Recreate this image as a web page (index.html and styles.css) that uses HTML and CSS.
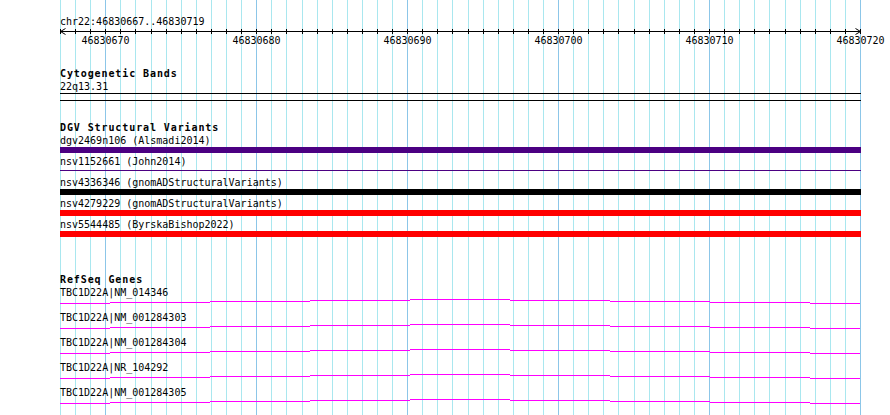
FILE: index.html
```html
<!DOCTYPE html>
<html>
  <head>
    <meta charset="utf-8">
    <title>chr22:46830667..46830719</title>
    <link rel="stylesheet" href="styles.css">
  </head>
  <body>
    <div class="browser">
      <svg class="grid" id="grid" width="890" height="415"></svg>

      <div class="tracks">
        <div class="ruler">
          <div class="locus">chr22:46830667..46830719</div>
          <svg class="scale" id="scale" width="801" height="8">
            <path class="arrow" d="M5.5 1.5L0.5 4.5L5.5 7.5"/>
            <path class="arrow" d="M795.5 1.5L800.5 4.5L795.5 7.5"/>
          </svg>
          <div class="scale-labels">
            <span style="left:45.5px">46830670</span>
            <span style="left:196.5px">46830680</span>
            <span style="left:347.5px">46830690</span>
            <span style="left:498.5px">46830700</span>
            <span style="left:649.5px">46830710</span>
            <span style="left:800.5px">46830720</span>
          </div>
        </div>

        <div class="track track-cyto">
          <div class="track-title">Cytogenetic Bands</div>
          <div class="feature">
            <div class="feature-label">22q13.31</div>
            <div class="band"></div>
          </div>
        </div>

        <div class="track track-dgv">
          <div class="track-title">DGV Structural Variants</div>
          <div class="feature">
            <div class="feature-label">dgv2469n106 (Alsmadi2014)</div>
            <div class="bar bar-indigo"></div>
          </div>
          <div class="feature">
            <div class="feature-label">nsv1152661 (John2014)</div>
            <div class="bar bar-thin"></div>
          </div>
          <div class="feature">
            <div class="feature-label">nsv4336346 (gnomADStructuralVariants)</div>
            <div class="bar bar-black"></div>
          </div>
          <div class="feature">
            <div class="feature-label">nsv4279229 (gnomADStructuralVariants)</div>
            <div class="bar bar-red"></div>
          </div>
          <div class="feature">
            <div class="feature-label">nsv5544485 (ByrskaBishop2022)</div>
            <div class="bar bar-red"></div>
          </div>
        </div>

        <div class="track track-genes">
          <div class="track-title">RefSeq Genes</div>
          <div class="feature feature-gene">
            <div class="feature-label">TBC1D22A|NM_014346</div>
            <svg class="intron" width="800" height="8"><path d="M0 5.5H50M50 4.5H150M150 3.5H250M250 2.5H350M350 1.5H450M450 2.5H550M550 3.5H650M650 4.5H750M750 5.5H800"/></svg>
          </div>
          <div class="feature feature-gene">
            <div class="feature-label">TBC1D22A|NM_001284303</div>
            <svg class="intron" width="800" height="8"><path d="M0 5.5H50M50 4.5H150M150 3.5H250M250 2.5H350M350 1.5H450M450 2.5H550M550 3.5H650M650 4.5H750M750 5.5H800"/></svg>
          </div>
          <div class="feature feature-gene">
            <div class="feature-label">TBC1D22A|NM_001284304</div>
            <svg class="intron" width="800" height="8"><path d="M0 5.5H50M50 4.5H150M150 3.5H250M250 2.5H350M350 1.5H450M450 2.5H550M550 3.5H650M650 4.5H750M750 5.5H800"/></svg>
          </div>
          <div class="feature feature-gene">
            <div class="feature-label">TBC1D22A|NR_104292</div>
            <svg class="intron" width="800" height="8"><path d="M0 5.5H50M50 4.5H150M150 3.5H250M250 2.5H350M350 1.5H450M450 2.5H550M550 3.5H650M650 4.5H750M750 5.5H800"/></svg>
          </div>
          <div class="feature feature-gene">
            <div class="feature-label">TBC1D22A|NM_001284305</div>
            <svg class="intron" width="800" height="8"><path d="M0 5.5H50M50 4.5H150M150 3.5H250M250 2.5H350M350 1.5H450M450 2.5H550M550 3.5H650M650 4.5H750M750 5.5H800"/></svg>
          </div>
        </div>
      </div>
    </div>

    <script>
      var NS = 'http://www.w3.org/2000/svg';
      var grid = document.getElementById('grid');
      var scale = document.getElementById('scale');

      // 53 bases over 800px, from 46830667 on the left
      var BASES = 53;
      var WIDTH = 800;

      function rect(svg, x, y, w, h, cls){
        var r = document.createElementNS(NS, 'rect');
        r.setAttribute('x', x);
        r.setAttribute('y', y);
        r.setAttribute('width', w);
        r.setAttribute('height', h);
        r.setAttribute('class', cls);
        svg.appendChild(r);
      }

      rect(scale, 0, 4, WIDTH + 1, 1, 'tick');

      for (var i = 0; i <= BASES; i++){
        var x = Math.round(i * WIDTH / BASES);
        // every 10th base (46830670, 46830680...) gets a darker line
        rect(grid, 60 + x, 0, 1, 415, i % 10 == 3 ? 'grid-major' : 'grid-minor');
        rect(scale, x, 2, 1, 5, 'tick');
      }
    </script>
  </body>
</html>
```

FILE: styles.css
```css
*{
  box-sizing: border-box;
}

body{
  margin: 0;
  background: #fff;
  color: #000;
  font-family: "DejaVu Sans Mono", "Liberation Mono", monospace;
  font-size: 10px;
  line-height: 11px;
}

.browser{
  position: relative;
  width: 890px;
  height: 415px;
  overflow: hidden;
}

.grid{
  position: absolute;
  left: 0;
  top: 0;
}

.grid .grid-minor{
  fill: #a9e7ef;
}

.grid .grid-major{
  fill: #8cc6e8;
}

.tracks{
  position: relative;
  display: flex;
  flex-direction: column;
  width: 860px;
  padding: 16px 0 0 60px;
}

/* ruler */

.locus{
  height: 11px;
  white-space: nowrap;
}

.scale{
  display: block;
  overflow: visible;
}

.scale .tick{
  fill: #000;
}

.scale .arrow{
  fill: none;
  stroke: #000;
  stroke-width: 1;
}

.scale-labels{
  position: relative;
  height: 11px;
}

.scale-labels span{
  position: absolute;
  top: 0;
  transform: translateX(-50%);
  white-space: nowrap;
}

/* tracks */

.track{
  display: flex;
  flex-direction: column;
}

.track-cyto{
  margin-top: 22px;
}

.track-dgv{
  margin-top: 18px;
}

.track-genes{
  margin-top: 34px;
}

.track-title{
  height: 11px;
  margin-bottom: 2px;
  font-weight: bold;
  letter-spacing: 0.9px;
  white-space: nowrap;
}

.feature{
  display: flex;
  flex-direction: column;
  margin-bottom: 3px;
}

.feature-label{
  height: 11px;
  white-space: nowrap;
}

.band{
  width: 801px;
  height: 8px;
  margin-top: 1px;
  border-top: 1px solid #000;
  border-bottom: 1px solid #000;
}

.bar{
  width: 801px;
  height: 6px;
  margin-top: 1px;
}

.bar-indigo{
  background: #4b0082;
}

.bar-black{
  background: #000;
}

.bar-red{
  background: #f00;
}

.bar-thin{
  position: relative;
}

.bar-thin::after{
  content: "";
  position: absolute;
  left: 0;
  right: 0;
  top: 2px;
  height: 1px;
  background: #4b0082;
}

.feature-gene{
  margin-bottom: 6px;
}

.intron{
  display: block;
  shape-rendering: crispEdges;
}

.intron path{
  fill: none;
  stroke: #f0f;
  stroke-width: 1;
}
```
